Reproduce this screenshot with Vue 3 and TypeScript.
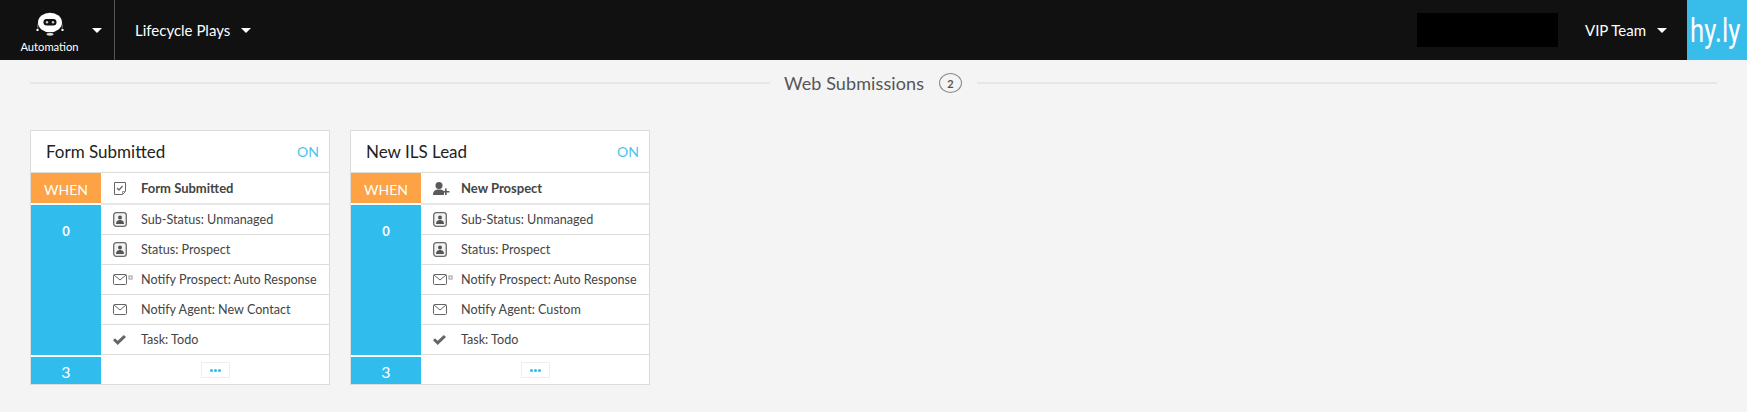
<script setup lang="ts">
type IconName = "form" | "person" | "personAdd" | "mailAuto" | "mail" | "check";

interface Step {
  icon: IconName;
  label: string;
}

interface Play {
  title: string;
  trigger: Step;
  steps: Step[];
}

const plays: Play[] = [
  {
    title: "Form Submitted",
    trigger: { icon: "form", label: "Form Submitted" },
    steps: [
      { icon: "person", label: "Sub-Status: Unmanaged" },
      { icon: "person", label: "Status: Prospect" },
      { icon: "mailAuto", label: "Notify Prospect: Auto Response" },
      { icon: "mail", label: "Notify Agent: New Contact" },
      { icon: "check", label: "Task: Todo" },
    ],
  },
  {
    title: "New ILS Lead",
    trigger: { icon: "personAdd", label: "New Prospect" },
    steps: [
      { icon: "person", label: "Sub-Status: Unmanaged" },
      { icon: "person", label: "Status: Prospect" },
      { icon: "mailAuto", label: "Notify Prospect: Auto Response" },
      { icon: "mail", label: "Notify Agent: Custom" },
      { icon: "check", label: "Task: Todo" },
    ],
  },
];
</script>

<template>
  <div class="page">
    <header class="topbar">
      <div class="brand-menu">
        <div class="bot">
          <svg width="30" height="26" viewBox="0 0 30 26">
            <path d="M3.500 12c-1 2-1 4-.5 6M26.500 12c1 2 1 4 .5 6" stroke="#777" stroke-width="1" fill="none" />
            <rect x="1.500" y="18" width="2" height="2" fill="#fff" />
            <rect x="26.500" y="18" width="2" height="2" fill="#fff" />
            <ellipse cx="15" cy="11.500" rx="12" ry="9.800" fill="#fff" />
            <rect x="8.500" y="8" width="13" height="6.500" rx="3.200" fill="#111" />
            <circle cx="12" cy="11.200" r="1.200" fill="#ccc" />
            <circle cx="18" cy="11.200" r="1.200" fill="#ccc" />
            <ellipse cx="15" cy="23.300" rx="3.500" ry="1.400" fill="#ddd" />
          </svg>
          <span class="bot-label">Automation</span>
        </div>
        <i class="caret" />
      </div>
      <div class="nav-item">
        <span>Lifecycle Plays</span>
        <i class="caret" />
      </div>
      <div class="redacted" />
      <div class="team">
        <span>VIP Team</span>
        <i class="caret" />
      </div>
      <div class="logo"><span>hy.ly</span></div>
    </header>

    <div class="section-head">
      <span class="rule" />
      <span class="section-title">Web Submissions</span>
      <span class="count">2</span>
      <span class="rule" />
    </div>

    <div class="cards">
      <section v-for="play in plays" :key="play.title" class="card">
        <div class="card-head">
          <span class="card-title">{{ play.title }}</span>
          <span class="state">ON</span>
        </div>
        <div class="when-row">
          <div class="when">WHEN</div>
          <div class="row trigger">
            <span class="icon">
              <svg v-if="play.trigger.icon === 'form'" width="14" height="15" viewBox="0 0 14 15" fill="none" stroke="#666" stroke-width="1">
                <path d="M1.500 1.500h11v9l-3 3h-8z" />
                <path d="M9.500 13.500v-3h3" stroke="#999" />
                <path d="M4 7l2 2 3.500-4" stroke-width="1.300" />
              </svg>
              <svg v-else width="17" height="13" viewBox="0 0 17 13" fill="#5a5a5a">
                <circle cx="6" cy="3.500" r="3.500" />
                <path d="M0 13c0-4 2-5.500 6-5.500 2.500 0 4 .5 5 1.800V13z" />
                <path d="M12 6.500h1.700V9H16.500v1.600h-2.800V13H12v-2.400H9.500V9H12z" />
              </svg>
            </span>
            <span>{{ play.trigger.label }}</span>
          </div>
        </div>
        <div class="step-block">
          <div class="zero">0</div>
          <div class="steps">
            <div v-for="step in play.steps" :key="step.label" class="row">
              <span class="icon">
                <svg v-if="step.icon === 'person'" width="14" height="15" viewBox="0 0 14 15">
                  <rect x=".7" y=".7" width="12.600" height="13.600" rx="2.500" fill="#f2f2f2" stroke="#6a6a6a" stroke-width="1.300" />
                  <circle cx="7" cy="5.500" r="2" fill="#555" />
                  <path d="M3 12c0-2.800 1.500-4 4-4s4 1.200 4 4z" fill="#555" />
                </svg>
                <svg v-else-if="step.icon === 'mailAuto'" width="20" height="11" viewBox="0 0 20 11" fill="none" stroke="#666" stroke-width="1">
                  <rect x=".5" y=".5" width="13" height="10" rx="1" />
                  <path d="M1 1l6 5 6-5" />
                  <rect x="16" y="2" width="3" height="3" stroke="#999" />
                </svg>
                <svg v-else-if="step.icon === 'mail'" width="14" height="11" viewBox="0 0 14 11" fill="none" stroke="#666" stroke-width="1">
                  <rect x=".5" y=".5" width="13" height="10" rx="1" />
                  <path d="M1 1l6 5 6-5" />
                </svg>
                <svg v-else width="13" height="10" viewBox="0 0 13 10" fill="#666">
                  <path d="M0 5.200l2-2 2.700 2.600L10.800 0 13 2 4.700 10z" />
                </svg>
              </span>
              <span>{{ step.label }}</span>
            </div>
          </div>
        </div>
        <div class="card-foot">
          <div class="total">3</div>
          <div class="more-cell">
            <button class="more" type="button"><i /><i /><i /></button>
          </div>
        </div>
      </section>
    </div>
  </div>
</template>

<style>
html,
body {
  margin: 0;
  background: #f4f4f4;
}
</style>

<style scoped>
.page {
  height: 412px;
  overflow: hidden;
  background: #f4f4f4;
  font-family: Lato, "Open Sans", sans-serif;
  color: #444;
}

.topbar {
  display: flex;
  align-items: center;
  height: 60px;
  background: #111;
  color: #fff;
}

.brand-menu {
  display: flex;
  align-items: center;
  width: 115px;
  height: 60px;
  box-sizing: border-box;
  padding-left: 20px;
  border-right: 1px solid #555;
}

.bot {
  display: flex;
  flex-direction: column;
  align-items: center;
  width: 59px;
  margin-right: 13px;
  padding-top: 5px;
}

.bot-label {
  margin-top: 3px;
  font-size: 11.200px;
  line-height: 14px;
}

.caret {
  display: block;
  width: 0;
  height: 0;
  border-left: 5px solid transparent;
  border-right: 5px solid transparent;
  border-top: 5px solid #fff;
}

.brand-menu .caret {
  margin-top: 1px;
}

.nav-item {
  display: flex;
  align-items: center;
  gap: 11px;
  margin-left: 20px;
  font-size: 15px;
}

.redacted {
  width: 141px;
  height: 34px;
  margin-left: auto;
  background: #000;
}

.team {
  display: flex;
  align-items: center;
  gap: 11px;
  margin-left: 27px;
  width: 102px;
  font-size: 15px;
}

.logo {
  display: flex;
  align-items: center;
  justify-content: center;
  width: 60px;
  height: 60px;
  background: #38bdeb;
  overflow: hidden;
}

.logo span {
  display: block;
  margin-right: 3px;
  font-family: Roboto, sans-serif;
  font-size: 33px;
  font-weight: 400;
  transform: scaleX(0.78);
  white-space: nowrap;
}

.section-head {
  display: flex;
  align-items: center;
  height: 46px;
  padding: 0 30px;
}

.rule {
  flex: 1;
  height: 2px;
  background: #e3e7ea;
}

.section-title {
  margin-left: 14px;
  font-size: 18px;
  letter-spacing: 0.1px;
  color: #555;
}

.count {
  display: flex;
  align-items: center;
  justify-content: center;
  box-sizing: border-box;
  width: 23px;
  height: 20px;
  margin: 0 15px;
  border: 1px solid #888;
  border-radius: 50%;
  font-size: 11px;
  font-weight: 700;
  color: #555;
}

.cards {
  display: flex;
  gap: 20px;
  padding: 24px 0 0 30px;
}

.card {
  width: 300px;
  box-sizing: border-box;
  border: 1px solid #dcdcdc;
  background: #fff;
}

.card-head {
  display: flex;
  align-items: center;
  justify-content: space-between;
  height: 41px;
  padding: 0 10px 0 15px;
  border-bottom: 1px solid #dcdcdc;
}

.card-title {
  font-size: 17px;
  color: #222;
}

.state {
  font-size: 14px;
  color: #4cc2ee;
}

.when-row {
  display: flex;
  height: 32px;
}

.when {
  width: 70px;
  height: 30px;
  background: #fda345;
  color: #fff;
  font-size: 14px;
  line-height: 33px;
  text-align: center;
}

.row {
  display: flex;
  align-items: center;
  height: 29px;
  border-bottom: 1px solid #dcdcdc;
  font-size: 12.600px;
  color: #444;
  white-space: nowrap;
}

.trigger {
  flex: 1;
  height: 32px;
  box-sizing: border-box;
  border-bottom: 2px solid #e8e8e8;
  font-size: 13px;
  font-weight: 700;
}

.icon {
  display: flex;
  align-items: center;
  width: 40px;
  padding-left: 12px;
  box-sizing: border-box;
}

.step-block {
  display: flex;
}

.zero {
  width: 70px;
  padding-top: 16px;
  box-sizing: border-box;
  background: #30bcec;
  color: #fff;
  font-size: 13px;
  font-weight: 700;
  line-height: 20px;
  text-align: center;
}

.steps {
  flex: 1;
}

.card-foot {
  display: flex;
  height: 29px;
}

.total {
  width: 70px;
  height: 27px;
  margin-top: 2px;
  background: #30bcec;
  color: #fff;
  font-size: 16px;
  line-height: 29px;
  text-align: center;
}

.more-cell {
  flex: 1;
  display: flex;
  justify-content: center;
  padding-top: 7px;
}

.more {
  display: flex;
  align-items: center;
  justify-content: center;
  gap: 1px;
  width: 29px;
  height: 16px;
  padding: 0;
  border: 1px solid #eee;
  background: #fff;
}

.more i {
  width: 3px;
  height: 3px;
  background: #30bcec;
  border-radius: 50%;
}
</style>
